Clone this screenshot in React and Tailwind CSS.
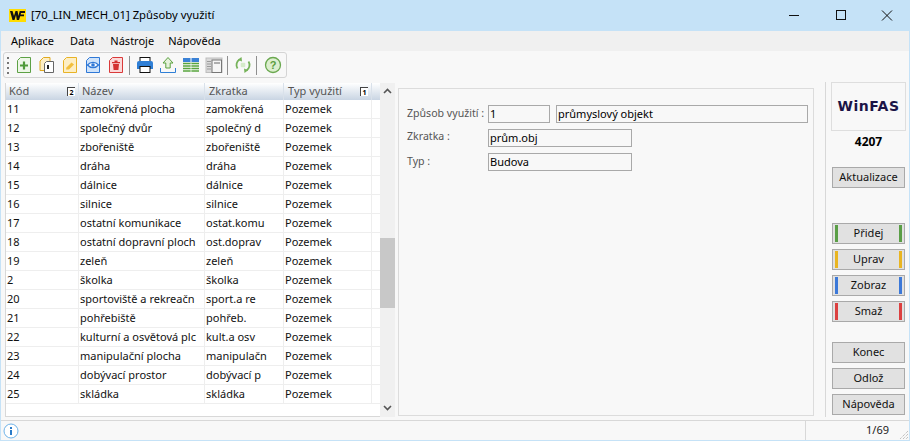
const rows = [
  ["11", "zamokřená plocha", "zamokřená"],
  ["12", "společný dvůr", "společný d"],
  ["13", "zbořeniště", "zbořeniště"],
  ["14", "dráha", "dráha"],
  ["15", "dálnice", "dálnice"],
  ["16", "silnice", "silnice"],
  ["17", "ostatní komunikace", "ostat.komu"],
  ["18", "ostatní dopravní ploch", "ost.doprav"],
  ["19", "zeleň", "zeleň"],
  ["2", "školka", "školka"],
  ["20", "sportoviště a rekreačn", "sport.a re"],
  ["21", "pohřebiště", "pohřeb."],
  ["22", "kulturní a osvětová plc", "kult.a osv"],
  ["23", "manipulační plocha", "manipulačn"],
  ["24", "dobývací prostor", "dobývací p"],
  ["25", "skládka", "skládka"],
];

const Sep = () => <div className="w-px h-[19px] bg-[#8f8f8f] mr-[5px] shrink-0" />;

const Ico = ({ children }) => (
  <svg width="20" height="20" viewBox="0 0 20 20" className="mr-[3px] shrink-0">{children}</svg>
);

function Toolbar() {
  return (
    <div className="ml-[2px] mt-px w-[284px] h-[26px] border border-[#d4d4d4] rounded-[3px] flex items-center pl-[3px]">
      <div className="flex flex-col gap-[3px] mr-[5px]">
        <div className="w-[2px] h-[2px] bg-[#777]" />
        <div className="w-[2px] h-[2px] bg-[#777]" />
        <div className="w-[2px] h-[2px] bg-[#777]" />
        <div className="w-[2px] h-[2px] bg-[#777]" />
      </div>
      <Ico>
        <path d="M3.500 5.500l3-3h10v15h-13z" fill="#eef7e8" stroke="#5da145" />
        <path d="M10 6.500v8M6 10.500h8" stroke="#4f9a38" strokeWidth="2.200" />
      </Ico>
      <Ico>
        <path d="M3 6l3.500-3.500h6.500v13H3z" fill="#fdeec4" stroke="#e0aa20" />
        <path d="M7.500 8.500l2-2h7v11h-9z" fill="#fff" stroke="#666" />
        <rect x="10" y="10" width="2" height="4" fill="#222" />
      </Ico>
      <Ico>
        <path d="M3.500 5.500l3-3h10v15h-13z" fill="#fdeec4" stroke="#e8b326" />
        <path d="M6.500 12.500l5-5 2.500 2-5 5H6z" fill="#f2bf3d" />
      </Ico>
      <Ico>
        <path d="M3.500 5.500l3-3h10v15h-13z" fill="#cfe3fa" stroke="#2f78d6" />
        <path d="M4.500 10c3-3.500 8-3.500 11 0-3 3.500-8 3.500-11 0z" fill="#fff" stroke="#2f78d6" strokeWidth="1.300" />
        <circle cx="10" cy="10" r="1.800" fill="#2f78d6" />
      </Ico>
      <Ico>
        <path d="M3.500 5.500l3-3h10v15h-13z" fill="#fbd9d9" stroke="#d93a3a" />
        <path d="M6 7h8v1.300H6zM8.500 5.500h3V7h-3zM7 9h6l-.6 6H7.600z" fill="#d32f2f" />
      </Ico>
      <Sep />
      <Ico>
        <rect x="5" y="2.500" width="10" height="5" fill="#fff" stroke="#111" />
        <path d="M2 8a2 2 0 0 1 2-2h12a2 2 0 0 1 2 2v6H2z" fill="#2f7fd6" />
        <rect x="5" y="11.500" width="10" height="6" fill="#fff" stroke="#111" />
      </Ico>
      <Ico>
        <path d="M10 2.500l5 5.500h-2.800v5H7.800V8H5z" fill="#e5f2dc" stroke="#5aa13f" />
        <path d="M2.500 13v4.500h15V13" fill="none" stroke="#2f7fd6" strokeWidth="1" />
      </Ico>
      <Ico>
        <rect x="2" y="3" width="16" height="4" fill="#3b82d6" />
        <path d="M10 3v4" stroke="#fff" />
        <path d="M2 8.500h16M2 11h16M2 13.500h16M2 16h16" stroke="#58a53e" strokeWidth="1.600" />
        <path d="M10 8v9" stroke="#fff" strokeWidth=".7" />
      </Ico>
      <Ico>
        <rect x="2" y="3" width="16" height="14.500" fill="#dadada" stroke="#bdbdbd" />
        <rect x="8" y="5" width="9.500" height="12.500" fill="#f5f5f5" stroke="#777" />
        <path d="M3 6.500h4M3 9h4M3 11.500h4M3 14h4" stroke="#9a9a9a" />
        <path d="M10 8h6" stroke="#666" />
      </Ico>
      <Sep />
      <Ico>
        <rect x="7.700" y="7.700" width="4.600" height="4.600" rx="1" fill="#d5ebc9" />
        <path d="M4.500 13.500a6.500 6.500 0 0 1 2-9" fill="none" stroke="#76b35a" strokeWidth="1.800" />
        <path d="M8.500 2l.5 4.500L4.800 4.800z" fill="#76b35a" />
        <path d="M15.500 6.500a6.500 6.500 0 0 1-2 9" fill="none" stroke="#76b35a" strokeWidth="1.800" />
        <path d="M11.500 18l-.5-4.500 4.200 1.700z" fill="#76b35a" />
      </Ico>
      <Sep />
      <svg width="20" height="20" viewBox="0 0 20 20" className="shrink-0 ml-[1px]">
        <circle cx="10" cy="10" r="7.500" fill="#dceecf" stroke="#6aa84f" strokeWidth="1.300" />
        <text x="10" y="14" textAnchor="middle" fontSize="11" fontWeight="700" fill="#5a9c3e" fontFamily="Liberation Sans, sans-serif">?</text>
      </svg>
    </div>
  );
}

const Th = ({ w, children, badge, pl = "pl-[3px]" }) => (
  <div
    className={`${w} h-[17px] shrink-0 flex items-center justify-between ${pl} pr-[3px] text-[#555] border-r border-[#d9e1ea] bg-gradient-to-b from-[#ffffff] to-[#c9d5e3]`}
  >
    <span>{children}</span>
    {badge && (
      <span className="w-[8px] h-[9px] bg-white border-t border-l border-[#444] text-[7px] leading-[9px] text-center text-black font-bold">
        {badge}
      </span>
    )}
  </div>
);

const Td = ({ w, children }) => (
  <div className={`${w} shrink-0 pl-px h-[18px] leading-[17px] overflow-hidden whitespace-nowrap border-r border-[#eeeeee]`}>{children}</div>
);

function ColorBtn({ label, color }) {
  return (
    <div className="h-[21px] border border-[#a9a9a9] bg-[#e1e1e1] flex items-center justify-between px-[2px]">
      <div className={`w-[3px] h-[17px] ${color}`} />
      <span>{label}</span>
      <div className={`w-[3px] h-[17px] ${color}`} />
    </div>
  );
}

const Btn = ({ label }) => (
  <div className="h-[21px] border border-[#a9a9a9] bg-[#e1e1e1] flex items-center justify-center">{label}</div>
);

const Field = ({ w, children }) => (
  <div className={`${w} h-[18px] border border-[#a9a9a9] bg-[#f8f8f8] flex items-center pl-px text-black text-[11px]`}>{children}</div>
);

export default function App() {
  return (
    <div
      className="w-[910px] h-[441px] overflow-hidden flex flex-col border-x border-b border-[#c5e2f7] bg-[#f8f8f8] text-[11px] text-[#111]"
      style={{ fontFamily: '"Noto Sans", "Liberation Sans", sans-serif' }}
    >
      <div className="h-[31px] -mx-px shrink-0 bg-[#c5e2f7] flex items-center pl-[9px] text-[11.3px] text-black">
        <div className="w-[17px] h-[13px] bg-[#ffdc00] mr-[5px] flex items-center justify-center">
          <svg width="15" height="9" viewBox="0 0 15 9">
            <path d="M0 0h2.500l1.500 5 1.500-5h2l1 5 1.200-5H15v2h-4l-.3 1.500H14v1.800h-3.800L9 9H6.800L6 4 4.500 9H2.500z" fill="#111" />
          </svg>
        </div>
        <span>[70_LIN_MECH_01] Způsoby využití</span>
        <div className="ml-auto flex items-center">
          <svg width="46" height="31" viewBox="0 0 46 31"><path d="M17 15.500h10" stroke="#111" /></svg>
          <svg width="46" height="31" viewBox="0 0 46 31"><rect x="18.500" y="10.500" width="9" height="9" fill="none" stroke="#111" /></svg>
          <svg width="46" height="31" viewBox="0 0 46 31"><path d="M18 10.500l10 10M28 10.500l-10 10" stroke="#111" /></svg>
        </div>
      </div>

      <div className="h-[20px] shrink-0 bg-[#f0f0f0] flex items-center pl-[10px] gap-[16px] text-black">
        <span>Aplikace</span>
        <span>Data</span>
        <span>Nástroje</span>
        <span className="-ml-[2px]">Nápověda</span>
      </div>

      <Toolbar />

      <div className="flex flex-1 min-h-0 mt-[5px]">
        <div className="ml-[4px] w-[375px] h-[334px] shrink-0 border-l border-b border-[#d8d8d8] bg-white flex flex-col">
          <div className="h-[17px] shrink-0 flex bg-gradient-to-b from-[#ffffff] to-[#c9d5e3]">
            <Th w="w-[73px]" badge="2">Kód</Th>
            <Th w="w-[126px]">Název</Th>
            <Th w="w-[79px]" pl="pl-[4px]">Zkratka</Th>
            <Th w="w-[88px]" pl="pl-[4px]" badge="1">Typ využití</Th>
          </div>
          {rows.map((r) => (
            <div key={r[0]} className="h-[19px] shrink-0 flex items-start border-b border-[#eeeeee]">
              <Td w="w-[73px]">{r[0]}</Td>
              <Td w="w-[126px]">{r[1]}</Td>
              <Td w="w-[79px]">{r[2]}</Td>
              <Td w="w-[88px]">Pozemek</Td>
            </div>
          ))}
        </div>

        <div className="w-[15px] h-[334px] shrink-0 bg-[#f0f0f0] flex flex-col items-center">
          <svg width="9" height="6" viewBox="0 0 9 6" className="mt-[5px] shrink-0"><path d="M1 5l3.500-3.500L8 5" fill="none" stroke="#555" strokeWidth="1.600" /></svg>
          <div className="mt-[144px] w-full h-[70px] bg-[#c8c8c8] shrink-0" />
          <svg width="9" height="6" viewBox="0 0 9 6" className="mt-[97px] shrink-0"><path d="M1 1l3.500 3.500L8 1" fill="none" stroke="#555" strokeWidth="1.600" /></svg>
        </div>

        <div className="ml-[3px] mt-[5px] w-[416px] h-[328px] shrink-0 border border-[#dcdcdc] pl-[8px] pt-[16px] text-[#555] text-[10.6px]">
          <div className="flex items-center h-[18px]">
            <span className="w-[81px]">Způsob využití :</span>
            <Field w="w-[62px]">1</Field>
            <Field w="w-[252px] ml-[6px]">průmyslový objekt</Field>
          </div>
          <div className="flex items-center h-[18px] mt-[6px]">
            <span className="w-[81px] -mt-[2px]">Zkratka :</span>
            <Field w="w-[144px]">prům.obj</Field>
          </div>
          <div className="flex items-center h-[18px] mt-[6px]">
            <span className="w-[81px]">Typ :</span>
            <Field w="w-[144px]">Budova</Field>
          </div>
        </div>

        <div className="ml-[11px] -mt-px w-px h-[335px] shrink-0 bg-[#d8d8d8]" />

        <div className="ml-[5px] -mt-px w-[75px] shrink-0 flex flex-col">
          <div className="h-[49px] shrink-0 border border-[#dedede] flex items-center justify-center">
            <span className="text-[14px] font-bold text-[#1b1446] tracking-[0.5px]" style={{ fontFamily: '"DejaVu Sans", sans-serif' }}>WinFAS</span>
          </div>
          <div className="h-[16px] leading-[16px] text-center font-bold text-black text-[12px] mt-[3px]">4207</div>
          <div className="mx-px mt-[17px] flex flex-col">
            <Btn label="Aktualizace" />
            <div className="mt-[35px] flex flex-col gap-[5px]">
              <ColorBtn label="Přidej" color="bg-[#5a9e46]" />
              <ColorBtn label="Uprav" color="bg-[#e9b521]" />
              <ColorBtn label="Zobraz" color="bg-[#3b78d8]" />
              <ColorBtn label="Smaž" color="bg-[#dc4040]" />
            </div>
            <div className="mt-[20px] flex flex-col gap-[5px]">
              <Btn label="Konec" />
              <Btn label="Odlož" />
              <Btn label="Nápověda" />
            </div>
          </div>
        </div>
      </div>

      <div className="h-[20px] shrink-0 border-t border-[#d8d8d8] flex items-center pl-[2px]">
        <svg width="16" height="16" viewBox="0 0 16 16">
          <circle cx="8" cy="8" r="7" fill="#fff" stroke="#6fb3e8" />
          <rect x="7" y="7" width="2" height="5" fill="#2a7bc8" />
          <rect x="7" y="4" width="2" height="2" fill="#2a7bc8" />
        </svg>
        <div className="ml-auto w-[104px] h-full border-l border-[#d8d8d8] flex items-center justify-between pl-[60px] text-[#222]">
          <span>1/69</span>
          <svg width="10" height="19" viewBox="0 0 10 19" className="self-end">
            <path d="M9 10L1 18M9 13l-5 5M9 16l-2 2" stroke="#aaa" strokeDasharray="1 1" />
          </svg>
        </div>
      </div>
    </div>
  );
}
